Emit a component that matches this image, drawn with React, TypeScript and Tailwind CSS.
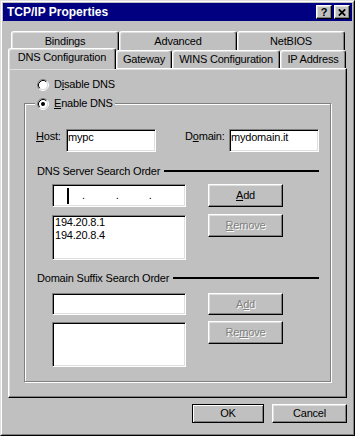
import React from "react";

const FACE = "bg-[#c0c0c0]";

function U({ children }: { children: React.ReactNode }) {
  return <span className="underline decoration-1 underline-offset-1">{children}</span>;
}

function Radio({ checked }: { checked?: boolean }) {
  return (
    <svg width="12" height="12" viewBox="0 0 12 12" className="shrink-0">
      <circle cx="6" cy="6" r="4.5" fill="#fff" />
      <path d="M2.11 9.89 A5.5 5.5 0 0 1 9.89 2.11" stroke="#808080" strokeWidth="1" fill="none" />
      <path d="M9.89 2.11 A5.5 5.5 0 0 1 2.11 9.89" stroke="#fff" strokeWidth="1" fill="none" />
      <path d="M2.82 9.18 A4.5 4.5 0 0 1 9.18 2.82" stroke="#000" strokeWidth="1" fill="none" />
      <path d="M9.18 2.82 A4.5 4.5 0 0 1 2.82 9.18" stroke="#dfdfdf" strokeWidth="1" fill="none" />
      {checked && <circle cx="6" cy="6" r="2" fill="#000" />}
    </svg>
  );
}

function Btn({
  children,
  w,
  h,
  disabled,
}: {
  children: React.ReactNode;
  w: string;
  h: string;
  disabled?: boolean;
}) {
  return (
    <div
      className={`${w} ${h} shrink-0 ${FACE} border border-t-white border-l-white border-r-black border-b-black shadow-[inset_-1px_-1px_#808080,inset_1px_1px_#dfdfdf] flex items-center justify-center ${
        disabled ? "text-[#808080] [text-shadow:1px_1px_0_#fff]" : "text-black"
      }`}
    >
      <span>{children}</span>
    </div>
  );
}

function Sunken({ className, children }: { className: string; children?: React.ReactNode }) {
  return (
    <div
      className={`${className} shrink-0 bg-white border border-t-[#808080] border-l-[#808080] border-r-white border-b-white shadow-[inset_1px_1px_#000,inset_-1px_-1px_#dfdfdf]`}
    >
      {children}
    </div>
  );
}

function Tab({ label, w, h, selected }: { label: string; w: string; h: string; selected?: boolean }) {
  return (
    <div
      className={`${w} ${h} shrink-0 ${FACE} rounded-t-[3px] border-t border-l border-r border-t-white border-l-white border-r-black shadow-[inset_-1px_0_#808080,inset_1px_1px_#dfdfdf] flex justify-center ${
        selected ? "relative z-10 -mb-[1px] items-start pt-[2px]" : "items-center"
      }`}
    >
      <span>{label}</span>
    </div>
  );
}

function SectionLabel({ children, mt }: { children: React.ReactNode; mt: string }) {
  return (
    <div className={`flex items-center h-[14px] ${mt} pl-[1px]`}>
      <span className="whitespace-nowrap">{children}</span>
      <div className="flex-1 h-[2px] bg-black ml-[4px]" />
    </div>
  );
}

function TitleBtn({ children }: { children: React.ReactNode }) {
  return (
    <div className="w-[16px] h-[14px] shrink-0 bg-[#c0c0c0] border border-t-white border-l-white border-r-black border-b-black shadow-[inset_-1px_-1px_#808080,inset_1px_1px_#dfdfdf] flex items-center justify-center">
      {children}
    </div>
  );
}

export default function App() {
  return (
    <div className="font-['Liberation_Sans',Arial,sans-serif] text-[11px] leading-[13px] tracking-[-0.2px] text-black">
      <div className={`w-[355px] h-[436px] ${FACE} border border-t-[#dfdfdf] border-l-[#dfdfdf] border-r-black border-b-black`}>
        <div className="h-full border border-t-white border-l-white border-r-[#808080] border-b-[#808080] p-[1px] flex flex-col">
          {/* Title bar */}
          <div className="h-[18px] bg-[#000080] flex items-center pl-[4px] pr-[2px]">
            <span className="flex-1 text-white font-bold text-[12px] tracking-normal leading-[14px]">
              TCP/IP Properties
            </span>
            <TitleBtn>
              <span className="font-bold text-[11px] leading-[11px] tracking-normal">?</span>
            </TitleBtn>
            <div className="w-[2px]" />
            <TitleBtn>
              <svg width="8" height="7" viewBox="0 0 8 7">
                <path d="M0.8 0.4 L7.2 6.6 M7.2 0.4 L0.8 6.6" stroke="#000" strokeWidth="1.8" />
              </svg>
            </TitleBtn>
          </div>

          <div className="px-[5px] mt-[10px] flex flex-col">
            {/* Tabs back row */}
            <div className="flex h-[19px] pl-[3px]">
              <Tab label="Bindings" w="w-[108px]" h="h-[19px]" />
              <Tab label="Advanced" w="w-[118px]" h="h-[19px]" />
              <Tab label="NetBIOS" w="w-[108px]" h="h-[19px]" />
            </div>
            {/* Tabs front row */}
            <div className="flex items-end h-[18px]">
              <Tab label="DNS Configuration" w="w-[108px]" h="h-[21px]" selected />
              <Tab label="Gateway" w="w-[56px]" h="h-[18px]" />
              <Tab label="WINS Configuration" w="w-[108px]" h="h-[18px]" />
              <Tab label="IP Address" w="w-[66px]" h="h-[18px]" />
            </div>

            {/* Panel */}
            <div className="h-[330px] border border-t-white border-l-white border-r-black border-b-black shadow-[inset_-1px_-1px_#808080,inset_1px_1px_#dfdfdf] pt-[9px]">
              <div className="flex items-center h-[13px] pl-[28px]">
                <Radio />
                <span className="ml-[5px]">
                  D<U>i</U>sable DNS
                </span>
              </div>

              <fieldset className="ml-[15px] mt-[6px] w-[307px] border border-[#808080] shadow-[inset_1px_1px_#fff,1px_1px_#fff] px-[11px] pt-[19px] pb-[14px]">
                <legend className={`-ml-[1px] px-[2px] ${FACE}`}>
                  <span className="flex items-center h-[13px]">
                    <Radio checked />
                    <span className="ml-[5px]">
                      <U>E</U>nable DNS
                    </span>
                  </span>
                </legend>

                {/* Host / Domain */}
                <div className="flex h-[23px]">
                  <span className="w-[30px] pt-[1px] shrink-0">
                    <U>H</U>ost:
                  </span>
                  <Sunken className="w-[90px] h-[23px] pl-[1px] pt-[1px]">mypc</Sunken>
                  <span className="w-[44px] ml-[29px] pt-[1px] shrink-0">
                    D<U>o</U>main:
                  </span>
                  <Sunken className="w-[90px] h-[23px] pl-[1px] pt-[1px]">mydomain.it</Sunken>
                </div>

                <SectionLabel mt="mt-[12px]">DNS Server Search Order</SectionLabel>

                <div className="flex mt-[6px] pl-[16px]">
                  <Sunken className="w-[134px] h-[23px] flex items-center">
                    <div className="ml-[14px] w-[2px] h-[16px] bg-black" />
                    <span className="ml-[13px]">.</span>
                    <span className="ml-[31px]">.</span>
                    <span className="ml-[30px]">.</span>
                  </Sunken>
                  <div className="ml-[22px]">
                    <Btn w="w-[75px]" h="h-[23px]">
                      <U>A</U>dd
                    </Btn>
                  </div>
                </div>

                <div className="flex items-start mt-[7px] pl-[16px]">
                  <Sunken className="w-[134px] h-[45px] mt-[1px] pl-[2px]">
                    <div>194.20.8.1</div>
                    <div>194.20.8.4</div>
                  </Sunken>
                  <div className="ml-[22px]">
                    <Btn w="w-[75px]" h="h-[23px]" disabled>
                      <U>R</U>emove
                    </Btn>
                  </div>
                </div>

                <SectionLabel mt="mt-[11px]">Domain Suffix Search Order</SectionLabel>

                <div className="flex mt-[8px] pl-[16px]">
                  <Sunken className="w-[134px] h-[22px]" />
                  <div className="ml-[22px]">
                    <Btn w="w-[75px]" h="h-[22px]" disabled>
                      A<U>d</U>d
                    </Btn>
                  </div>
                </div>

                <div className="flex items-start mt-[6px] pl-[16px]">
                  <Sunken className="w-[134px] h-[45px] mt-[1px]" />
                  <div className="ml-[22px]">
                    <Btn w="w-[75px]" h="h-[23px]" disabled>
                      Re<U>m</U>ove
                    </Btn>
                  </div>
                </div>
              </fieldset>
            </div>

            {/* Bottom buttons */}
            <div className="flex justify-end gap-[8px] mt-[6px]">
              <div className="w-[72px] h-[19px] bg-[#c0c0c0] border border-black shadow-[inset_1px_1px_#fff,inset_-1px_-1px_#808080] flex items-center justify-center">
                OK
              </div>
              <Btn w="w-[75px]" h="h-[19px]">
                Cancel
              </Btn>
            </div>
          </div>
        </div>
      </div>
    </div>
  );
}
